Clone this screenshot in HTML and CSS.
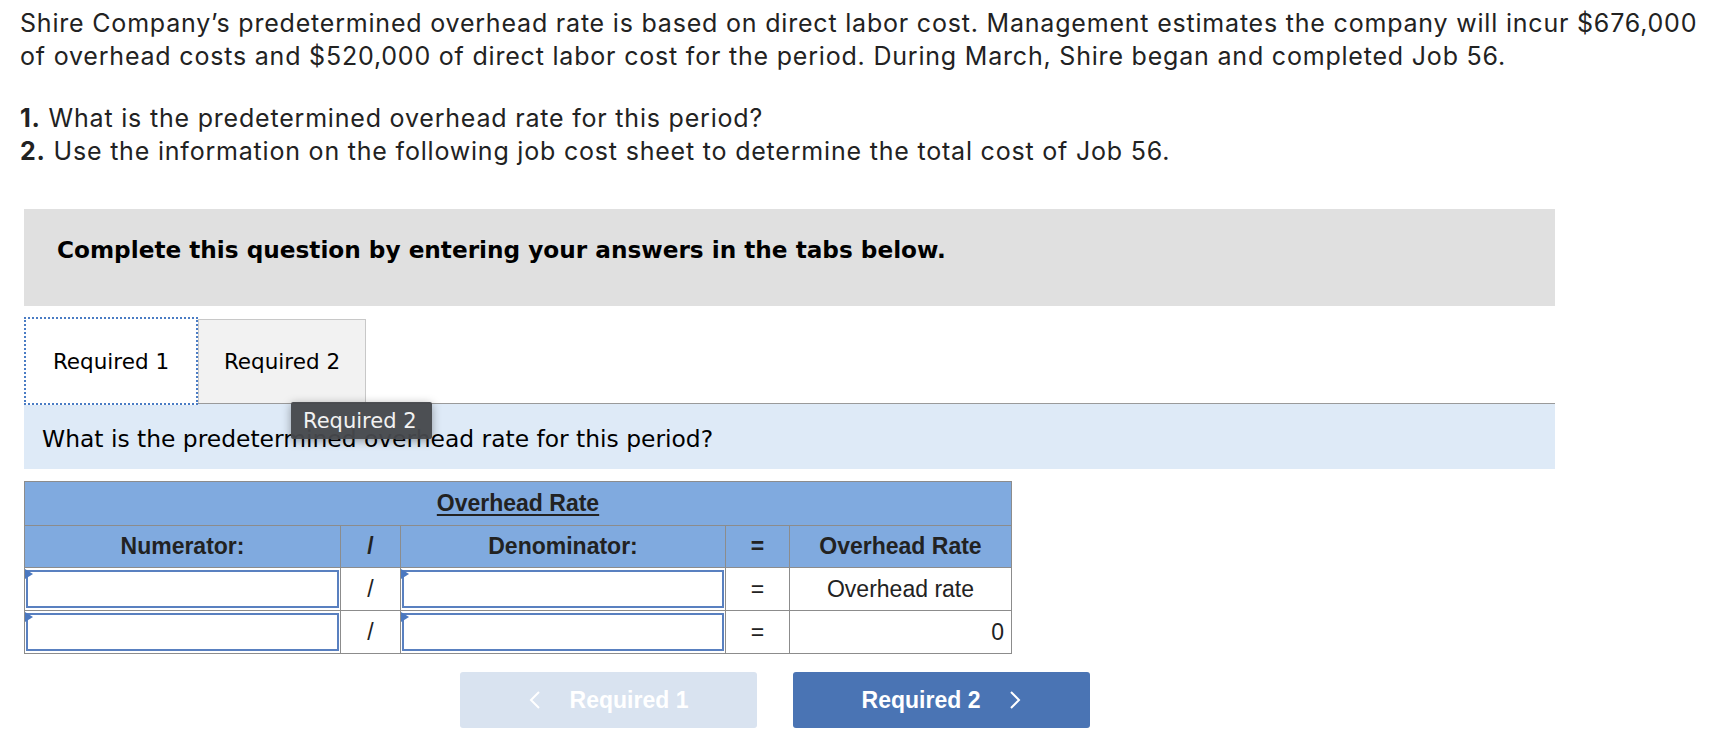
FILE: index.html
```html
<!DOCTYPE html>
<html lang="en">
<head>
<meta charset="utf-8">
<title>Job cost</title>
<link rel="stylesheet" href="styles.css">
</head>
<body>
<div class="page">
  <p class="intro">Shire Company’s predetermined overhead rate is based on direct labor cost. Management estimates the company will incur $676,000 of overhead costs and $520,000 of direct labor cost for the period. During March, Shire began and completed Job 56.</p>
  <div class="questions">
    <div><b>1.</b> What is the predetermined overhead rate for this period?</div>
    <div><b>2.</b> Use the information on the following job cost sheet to determine the total cost of Job 56.</div>
  </div>

  <div class="panel">
    <div class="instr">Complete this question by entering your answers in the tabs below.</div>
    <div class="tabs">
      <div class="tab tab-active">Required 1</div>
      <div class="tab tab-idle">Required 2</div>
    </div>
    <div class="prompt">What is the predetermined overhead rate for this period?</div>
    <div class="tooltip">Required 2</div>

    <table class="grid">
      <colgroup>
        <col class="c-num"><col class="c-op"><col class="c-den"><col class="c-eq"><col class="c-res">
      </colgroup>
      <tr class="h1"><th colspan="5"><u>Overhead Rate</u></th></tr>
      <tr class="h2"><th>Numerator:</th><th>/</th><th>Denominator:</th><th>=</th><th>Overhead Rate</th></tr>
      <tr class="r1">
        <td class="in"><div class="field"><span class="flag"></span></div></td>
        <td class="op">/</td>
        <td class="in"><div class="field"><span class="flag"></span></div></td>
        <td class="op">=</td>
        <td class="res">Overhead rate</td>
      </tr>
      <tr class="r2">
        <td class="in"><div class="field"><span class="flag"></span></div></td>
        <td class="op">/</td>
        <td class="in"><div class="field"><span class="flag"></span></div></td>
        <td class="op">=</td>
        <td class="res num">0</td>
      </tr>
    </table>

    <div class="nav">
      <div class="btn btn-prev"><svg class="chev" width="12" height="18" viewBox="0 0 12 18"><polyline points="10,1 2,9 10,17" fill="none" stroke="#fff" stroke-width="2"/></svg><span>Required 1</span></div>
      <div class="btn btn-next"><span>Required 2</span><svg class="chev" width="12" height="18" viewBox="0 0 12 18"><polyline points="2,1 10,9 2,17" fill="none" stroke="#fff" stroke-width="2"/></svg></div>
    </div>
  </div>
</div>
</body>
</html>
```

FILE: styles.css
```css
html, body { margin: 0; padding: 0; background: #fff; }
.page { padding: 7px 0 0 20px; }

.intro, .questions {
  font-family: Inter, Lato, "Liberation Sans", sans-serif;
  font-size: 25px;
  line-height: 33px;
  letter-spacing: 0.8px;
  color: #222;
}
.intro {
  margin: 0;
  width: 1690px;
}
.questions { margin-top: 29px; }
.questions b { font-weight: 700; }

.panel {
  position: relative;
  margin: 41px 0 0 4px;
  width: 1531px;
}
.instr {
  background: #e0e0e0;
  padding: 27px 33px 43px;
  font-family: "DejaVu Sans", Verdana, sans-serif;
  font-weight: bold;
  font-size: 23.2px;
  line-height: 27px;
  color: #000;
}

.tabs {
  margin-top: 12px;
  height: 85px;
  display: flex;
  align-items: flex-start;
  border-bottom: 1px solid #9a9a9a;
}
.tab {
  box-sizing: border-box;
  display: flex;
  align-items: center;
  justify-content: center;
  font-family: "DejaVu Sans", Verdana, sans-serif;
  font-size: 21.5px;
  color: #000;
}
.tab-active {
  position: relative;
  z-index: 1;
  width: 174px;
  height: 88px;
  margin-top: -1px;
  background: #fff;
  border: 2px dotted #4a7cc4;
}
.tab-idle {
  width: 168px;
  height: 84px;
  margin-top: 1px;
  background: #f2f2f2;
  border: 1px solid #c8c8c8;
  border-bottom: 0;
}

.prompt {
  background: #deeaf7;
  padding: 21px 18px 16px;
  font-family: "DejaVu Sans", Verdana, sans-serif;
  font-size: 23.4px;
  line-height: 28px;
  color: #000;
}
.tooltip {
  position: absolute;
  left: 267px;
  top: 193px;
  width: 141px;
  height: 37px;
  box-sizing: border-box;
  padding-left: 12px;
  display: flex;
  align-items: center;
  background: rgba(70, 72, 76, 0.96);
  color: #f2f2f2;
  border-radius: 2px;
  box-shadow: 0 2px 10px rgba(0, 0, 0, 0.35);
  font-family: "DejaVu Sans", Verdana, sans-serif;
  font-size: 21px;
  z-index: 5;
}

.grid {
  margin-top: 12px;
  border-collapse: collapse;
  table-layout: fixed;
  width: 987px;
  font-family: "Liberation Sans", Arial, sans-serif;
  font-size: 23px;
  color: #222;
  border: 1px solid #8c8c8c;
}
.c-num { width: 316px; }
.c-op { width: 60px; }
.c-den { width: 325px; }
.c-eq { width: 64px; }
.c-res { width: 222px; }
.grid th, .grid td {
  border: 1px solid #8c8c8c;
  padding: 0;
  text-align: center;
}
.grid th { background: #80aadf; font-weight: bold; }
.h1 th { height: 43px; }
.h1 u { text-decoration-thickness: 2px; text-underline-offset: 3px; }
.h2 th { height: 41px; }
.r1 td, .r2 td { height: 40px; }
.grid td.op { font-weight: normal; }
.grid td.in { position: relative; padding: 1px; }
.field {
  box-sizing: border-box;
  height: 38px;
  border: 2px solid #5980c0;
  background: #fff;
}
.flag {
  position: absolute;
  left: 0;
  top: 1px;
  width: 0;
  height: 0;
  border-left: 8px solid #4a78c0;
  border-top: 5px solid transparent;
  border-bottom: 5px solid transparent;
}
.grid td.num { text-align: right; padding-right: 7px; }

.nav {
  margin-top: 18px;
  padding-left: 436px;
  display: flex;
  gap: 36px;
}
.btn {
  box-sizing: border-box;
  width: 297px;
  height: 56px;
  border-radius: 3px;
  display: flex;
  align-items: center;
  justify-content: center;
  gap: 29px;
  font-family: "Liberation Sans", Arial, sans-serif;
  font-weight: bold;
  font-size: 23px;
  color: #fff;
}
.btn-prev { background: #d9e3f0; }
.btn-next { background: #4a74b4; }
.chev { display: block; }
```
